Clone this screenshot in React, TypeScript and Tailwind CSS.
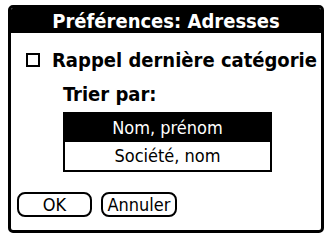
import React from "react";

export default function App() {
  const font = { fontFamily: '"DejaVu Sans Condensed", "DejaVu Sans", "Liberation Sans", sans-serif' };
  return (
    <div className="w-[329px] h-[234px] bg-white pt-[5px] pl-[8px]" style={font}>
      <div className="w-[316px] h-[228px] border-[3px] border-black rounded-[5px] flex flex-col bg-white overflow-hidden">
        <div className="h-[25px] bg-black text-white flex items-center justify-center text-[20px] font-bold leading-none">
          Préférences: Adresses
        </div>
        <div className="flex items-center pl-[15px] mt-[19px] h-[16px]">
          <div className="w-[14px] h-[14px] border-2 border-black" />
          <span className="ml-[12px] text-[20px] font-bold leading-none text-black">Rappel dernière catégorie</span>
        </div>
        <div className="pl-[52px] mt-[18px] text-[20px] font-bold leading-[16px] text-black">Trier par:</div>
        <div className="ml-[52px] mt-[10px] w-[209px] border-2 border-black flex flex-col text-[18px] leading-none">
          <div className="h-[28px] bg-black text-white flex items-center justify-center">Nom, prénom</div>
          <div className="h-[28px] bg-white text-black flex items-center justify-center">Société, nom</div>
        </div>
        <div className="flex items-center gap-[9px] pl-[6px] mt-[20px]">
          <div className="w-[75px] h-[25px] border-2 border-black rounded-[8px] flex items-center justify-center text-[18px] leading-none text-black">OK</div>
          <div className="w-[76px] h-[25px] border-2 border-black rounded-[8px] flex items-center justify-center text-[18px] leading-none text-black">Annuler</div>
        </div>
      </div>
    </div>
  );
}
